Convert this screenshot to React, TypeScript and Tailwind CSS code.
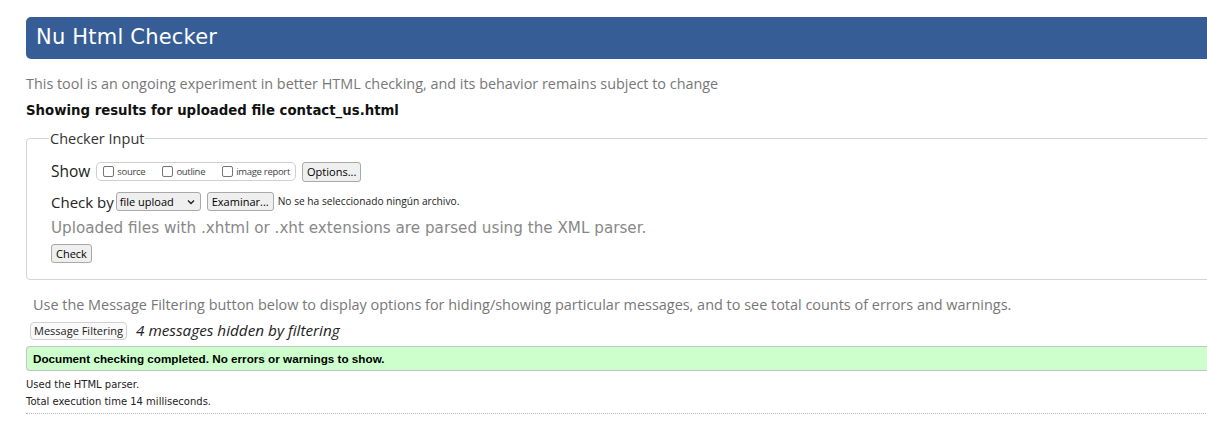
import React from "react";

const ubuntu = { fontFamily: '"Open Sans", "Noto Sans", sans-serif' };

function Btn({ children, className = "" }: { children: React.ReactNode; className?: string }) {
    return (
        <button
            className={"border border-[#a9a9a9] bg-[#efefef] rounded-[3px] text-[11px] leading-none text-black px-[4px] " + className}
            style={ubuntu}
        >
            {children}
        </button>
    );
}

function Box({ label }: { label: string }) {
    return (
        <label className="flex items-center gap-[3px] text-[9.5px] tracking-[-0.3px] text-[#444]" style={ubuntu}>
            <span className="inline-block w-[11px] h-[11px] border border-[#767676] rounded-[2px] bg-white" />
            {label}
        </label>
    );
}

export default function App() {
    return (
        <div className="w-[1207px] h-[425px] overflow-hidden bg-white">
            <div className="w-[1240px] ml-[26px] pt-[17px]">
                <div className="h-[42px] bg-[#365d96] rounded-l-[5px] flex items-center pl-[10px]">
                    <h1 className="text-white text-[21px] font-['DejaVu_Sans'] tracking-[0.2px]">Nu Html Checker</h1>
                </div>

                <p className="mt-[16px] text-[14.4px] text-[#777] leading-[18px]" style={ubuntu}>
                    This tool is an ongoing experiment in better HTML checking, and its behavior remains subject to change
                </p>
                <p className="mt-[10px] text-[13.3px] font-bold text-[#111] font-['DejaVu_Sans'] leading-[16px]">
                    Showing results for uploaded file contact_us.html
                </p>

                <fieldset className="mt-[9px] border border-[#d4d4d4] rounded-[4px] pl-[24px] pt-[0px] pb-[14px] h-[152px]">
                    <legend className="ml-[-2px] px-[1px] text-[14.5px] text-[#333]" style={ubuntu}>
                        Checker Input
                    </legend>

                    <div className="flex items-center mt-[12px] h-[20px]">
                        <span className="text-[15.5px] text-[#222] mr-[6px]" style={ubuntu}>Show</span>
                        <div className="flex items-center gap-[17px] border border-[#cfcfcf] rounded-[5px] h-[19px] pl-[6px] pr-[5px]">
                            <Box label="source" />
                            <Box label="outline" />
                            <Box label="image report" />
                        </div>
                        <Btn className="ml-[6px] h-[20px] px-[3px]">Options...</Btn>
                    </div>

                    <div className="flex items-center mt-[10px] h-[20px]">
                        <span className="text-[15px] text-[#222] mr-[2px]" style={ubuntu}>Check by</span>
                        <div
                            className="flex items-center justify-between w-[85px] h-[19px] border border-[#a9a9a9] bg-[#efefef] rounded-[3px] pl-[3px] pr-[5px] text-[11px] text-black"
                            style={ubuntu}
                        >
                            file upload
                            <svg width="8" height="6" viewBox="0 0 8 6">
                                <path d="M1 1.5 L4 4.5 L7 1.5" fill="none" stroke="#222" strokeWidth="1.4" />
                            </svg>
                        </div>
                        <Btn className="ml-[6px] h-[19px] px-[3px]">Examinar...</Btn>
                        <span className="ml-[4px] text-[10.2px] text-[#222]" style={ubuntu}>
                            No se ha seleccionado ningún archivo.
                        </span>
                    </div>

                    <p className="mt-[5px] text-[15.2px] text-[#888] font-['DejaVu_Sans'] leading-[22px]">
                        Uploaded files with .xhtml or .xht extensions are parsed using the XML parser.
                    </p>
                    <Btn className="mt-[5px] h-[19px]">Check</Btn>
                </fieldset>

                <p className="mt-[16px] ml-[7px] text-[14.45px] text-[#777] leading-[18px]" style={ubuntu}>
                    Use the Message Filtering button below to display options for hiding/showing particular messages, and to see total counts of errors and warnings.
                </p>

                <div className="flex items-center mt-[7px] ml-[4px] h-[19px]">
                    <button
                        className="h-[18px] border border-[#d0d0d0] bg-[#fafafa] rounded-[4px] px-[3px] text-[11px] text-[#222] leading-none"
                        style={ubuntu}
                    >
                        Message Filtering
                    </button>
                    <span className="ml-[9px] text-[15.3px] italic text-[#222]" style={ubuntu}>
                        4 messages hidden by filtering
                    </span>
                </div>

                <div className="mt-[6px] h-[25px] bg-[#ccffcc] border-y border-[#c2c2c2] border-l rounded-l-[4px] flex items-center pl-[6px]">
                    <span className="text-[11.7px] font-bold text-black font-['Liberation_Sans']">
                        Document checking completed. No errors or warnings to show.
                    </span>
                </div>

                <p className="mt-[5px] text-[10px] text-[#222] font-['DejaVu_Sans'] leading-[17px]">Used the HTML parser.</p>
                <p className="text-[10px] text-[#222] font-['DejaVu_Sans'] leading-[17px]">Total execution time 14 milliseconds.</p>
                <div className="mt-[3px] border-t border-dotted border-[#bbb]" />
            </div>
        </div>
    );
}
